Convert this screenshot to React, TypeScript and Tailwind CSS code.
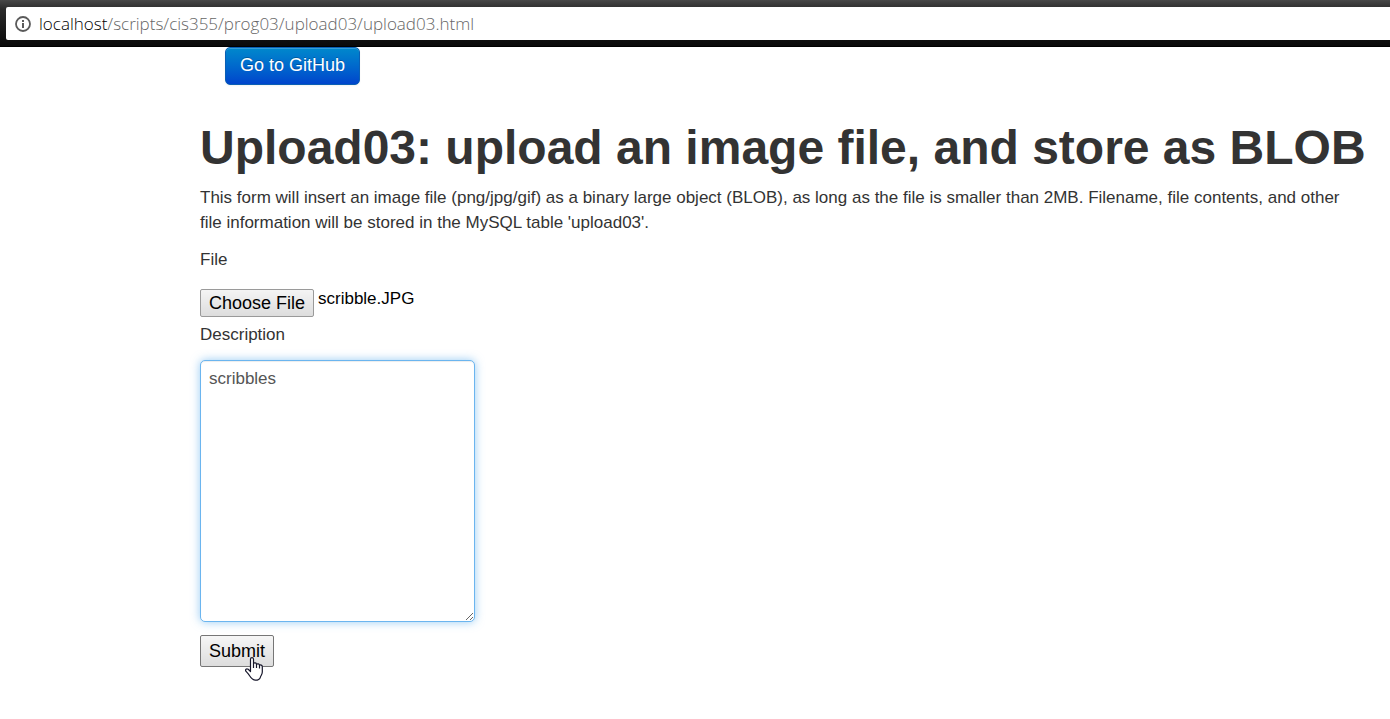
import { useState } from "react";

function AddressBar() {
  return (
    <header className="border-b border-black bg-linear-to-b from-[#484848] via-[#2b2b2b] via-20% to-[#0a0a0a] pt-[7px] pb-[6px] pl-[6px]">
      <div className="flex h-[33px] items-center gap-[7px] rounded-l-xs bg-white pl-2">
        <svg viewBox="0 0 18 18" className="size-[18px] shrink-0" aria-hidden="true">
          <circle cx="9" cy="9" r="7" fill="none" stroke="#5a5a5a" strokeWidth="1.8" />
          <path d="M8 8h2v5H8zM8 5h2v2H8z" fill="#5a5a5a" />
        </svg>
        <p className="font-['Open_Sans','Noto_Sans',sans-serif] text-[17px] leading-6 font-light whitespace-nowrap text-[#666]">
          <span className="text-black">localhost</span>
          /scripts/cis355/prog03/upload03/upload03.html
        </p>
      </div>
    </header>
  );
}

function HandPointer() {
  return (
    <svg
      viewBox="0 0 18 24"
      className="pointer-events-none absolute top-[22px] left-[45px] h-6 w-[18px]"
      aria-hidden="true"
    >
      <path
        d="M5.5 14.5V2.2C5.5 .2 8.5 .2 8.5 2.2V6.6C9 5.4 11.5 5.6 11.5 7.2C12.4 6.4 14.5 6.8 14.5 8.2C15.4 7.6 17.3 8 17.3 9.7V15C17.3 17.6 15.8 18.6 15.4 20.2C14.6 22.4 13 23.2 10.6 23.2C7.6 23.2 6.2 21.4 4.6 18.8C3.4 16.8 2.2 15.6 .9 14.2C-.1 12.6 1.4 11.2 3.2 12.3L5.5 14.5Z"
        fill="#fff"
        stroke="#16162a"
        strokeWidth="1.2"
        strokeLinejoin="round"
      />
      <path d="M8.5 6.5V11M11.5 7V11M14.5 8V11.5" fill="none" stroke="#16162a" strokeWidth="1.2" />
    </svg>
  );
}

export default function App() {
  const [fileName, setFileName] = useState("scribble.JPG");
  const [description, setDescription] = useState("scribbles");

  return (
    <div className="min-h-screen bg-white font-['Liberation_Sans',Arial,sans-serif] text-[17px] leading-[25px] text-[#333]">
      <AddressBar />
      <main className="pr-8 pl-[200px]">
        <a
          href="https://github.com"
          className="ml-[25px] inline-block rounded-[5px] border border-[#0a5fb4] bg-linear-to-b from-[#0088cc] to-[#0044cc] px-[14px] pt-[5px] pb-[6px] text-[18px] text-white shadow-[inset_0_1px_0_rgba(255,255,255,0.2),0_1px_2px_rgba(0,0,0,0.05)] [text-shadow:0_-1px_0_rgba(0,0,0,0.25)]"
        >
          Go to GitHub
        </a>
        <h1 className="-mr-8 pt-[38px] text-[48px] leading-[50px] font-bold">
          Upload03: upload an image file, and store as BLOB
        </h1>
        <p className="mt-3">
          This form will insert an image file (png/jpg/gif) as a binary large object (BLOB), as long as the file is
          smaller than 2MB. Filename, file contents, and other file information will be stored in the MySQL table
          'upload03'.
        </p>
        <form className="mt-3 flex flex-col items-start" onSubmit={(e) => e.preventDefault()}>
          <label htmlFor="userfile">File</label>
          <div className="mt-3.5 flex items-start gap-1 pb-[5px]">
            <input
              id="userfile"
              type="file"
              onChange={(e) => setFileName(e.target.files?.[0]?.name ?? "")}
              className="mt-[3px] h-7 w-[114px] text-transparent file:mr-1 file:h-7 file:rounded-xs file:border file:border-solid file:border-[#9a9a9a] file:bg-linear-to-b file:from-[#f4f4f4] file:to-[#dddddd] file:px-2 file:text-[18px] file:text-black"
            />
            <output htmlFor="userfile" className="text-black">
              {fileName}
            </output>
          </div>
          <label htmlFor="description">Description</label>
          <textarea
            id="description"
            rows={10}
            value={description}
            onChange={(e) => setDescription(e.target.value)}
            className="mt-[13px] w-[275px] rounded-[5px] border border-[#6bb5ef] bg-white px-2 py-[5px] text-[#555] shadow-[inset_0_1px_1px_rgba(0,0,0,0.075),0_0_10px_rgba(82,168,236,0.6)] outline-none"
          />
          <div className="relative mt-[13px]">
            <button
              type="submit"
              className="block h-8 rounded-xs border border-[#767676] bg-linear-to-b from-[#f6f6f6] to-[#dddddd] px-2 text-[18px] leading-7 text-black"
            >
              Submit
            </button>
            <HandPointer />
          </div>
        </form>
      </main>
    </div>
  );
}
